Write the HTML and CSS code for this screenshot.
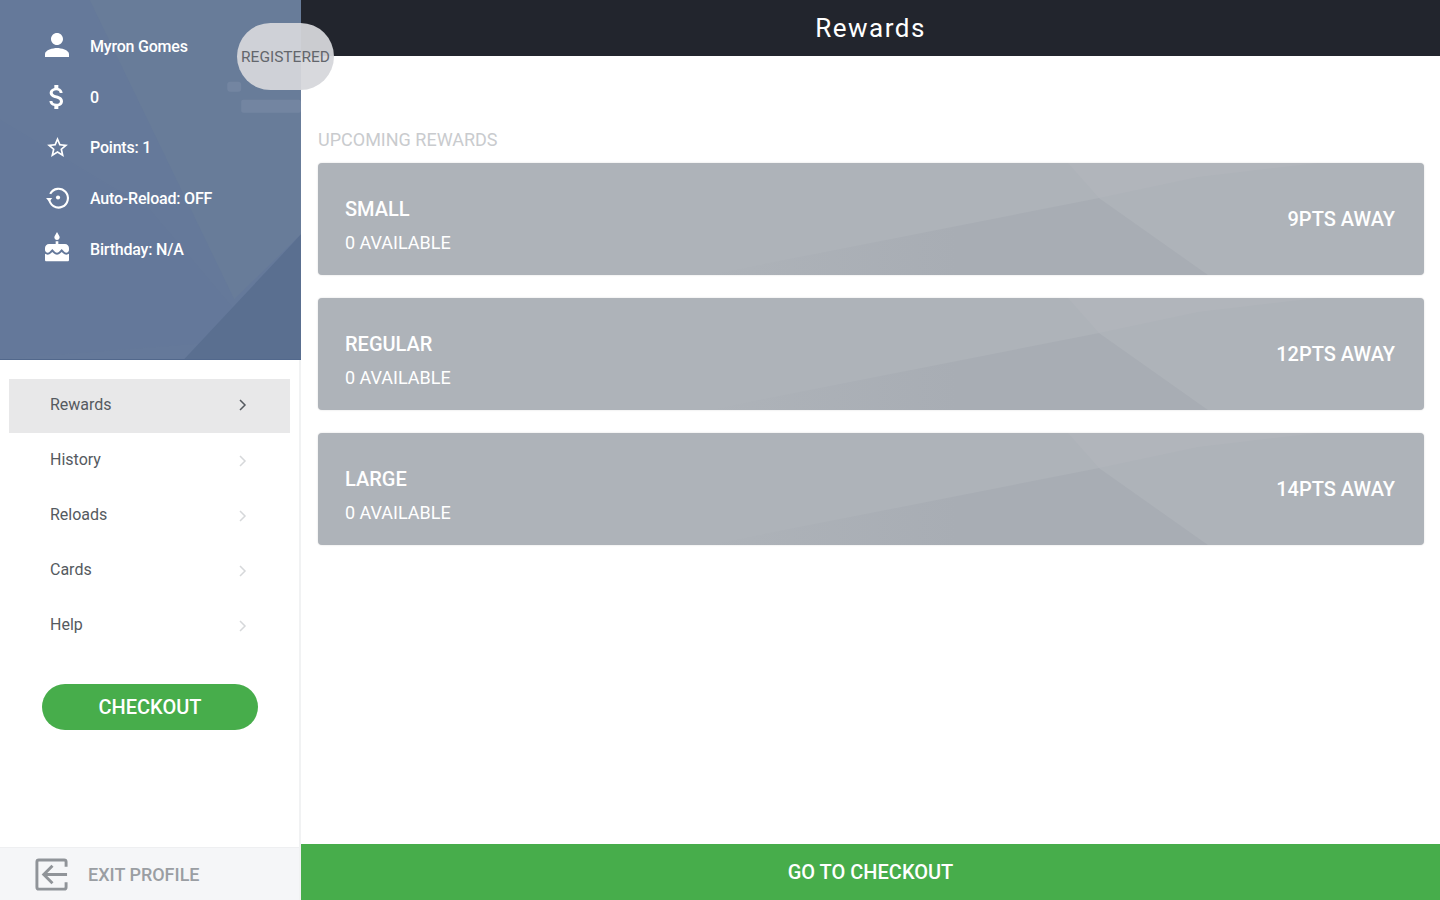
FILE: index.html
```html
<!DOCTYPE html>
<html>
<head>
    <meta charset="UTF-8">
    <title>Rewards</title>
    <link rel="stylesheet" href="styles.css">
</head>
<body>
    <div class="app">
        <aside class="sidebar">
            <div class="profile">
                <svg class="profile-bg" viewBox="0 0 302 360" preserveAspectRatio="none">
                    <polygon points="90,0 302,0 302,235 235,300" fill="#687c99"/>
                    <polygon points="0,120 150,210 260,340 0,360" fill="#64779a" opacity="0.35"/>
                    <polygon points="185,360 302,235 302,360" fill="#5a6f90"/>
                    <rect x="228" y="82" width="14" height="10" rx="3" fill="#7385a1"/>
                    <rect x="242" y="100" width="60" height="13" rx="2" fill="#7385a1"/>
                </svg>
                <div class="profile-row">
                    <svg class="profile-icon icon-user" viewBox="0 0 24 24"><path d="M12 12c2.21 0 4-1.79 4-4s-1.79-4-4-4-4 1.79-4 4 1.79 4 4 4zm0 2c-2.67 0-8 1.34-8 4v2h16v-2c0-2.66-5.33-4-8-4z"/></svg>
                    <span>Myron Gomes</span>
                </div>
                <div class="profile-row">
                    <svg class="profile-icon icon-money" viewBox="0 0 24 24"><path d="M11.8 10.9c-2.27-.59-3-1.2-3-2.15 0-1.09 1.01-1.85 2.7-1.85 1.78 0 2.44.85 2.5 2.1h2.21c-.07-1.72-1.12-3.3-3.21-3.81V3h-3v2.16c-1.94.42-3.5 1.68-3.5 3.61 0 2.31 1.91 3.46 4.7 4.13 2.5.6 3 1.48 3 2.41 0 .69-.49 1.79-2.7 1.79-2.06 0-2.87-.92-2.98-2.1h-2.2c.12 2.19 1.76 3.42 3.68 3.83V21h3v-2.15c1.95-.37 3.5-1.5 3.5-3.55 0-2.84-2.43-3.81-4.7-4.4z"/></svg>
                    <span>0</span>
                </div>
                <div class="profile-row">
                    <svg class="profile-icon icon-star" viewBox="0 0 24 24"><path d="M22 9.24l-7.19-.62L12 2 9.19 8.63 2 9.24l5.46 4.73L5.82 21 12 17.27 18.18 21l-1.63-7.03L22 9.24zM12 15.4l-3.76 2.27 1-4.28-3.32-2.88 4.38-.38L12 6.1l1.71 4.04 4.38.38-3.32 2.88 1 4.28L12 15.4z"/></svg>
                    <span>Points: 1</span>
                </div>
                <div class="profile-row">
                    <svg class="profile-icon icon-reload" viewBox="0 0 24 24"><path class="icon-line" d="M5 8.5A9 9 0 1 1 4 13"/><path d="M1 12.5h6l-3 3.5z"/><circle cx="12.5" cy="12" r="2"/></svg>
                    <span>Auto-Reload: OFF</span>
                </div>
                <div class="profile-row">
                    <svg class="profile-icon icon-cake" viewBox="0 0 24 24"><path d="M12 6c1.11 0 2-.9 2-2 0-.38-.1-.73-.29-1.03L12 0l-1.71 2.97c-.19.3-.29.65-.29 1.03 0 1.1.9 2 2 2zm4.6 9.99l-1.07-1.07-1.08 1.07c-1.3 1.3-3.58 1.31-4.89 0l-1.07-1.07-1.09 1.07C6.75 16.64 5.88 17 4.96 17c-.73 0-1.4-.23-1.96-.61V21c0 .55.45 1 1 1h16c.55 0 1-.45 1-1v-4.61c-.56.38-1.23.61-1.96.61-.92 0-1.79-.36-2.44-1.01zM18 9h-5V7h-2v2H6c-1.66 0-3 1.34-3 3v1.54c0 1.08.88 1.96 1.96 1.96.52 0 1.02-.2 1.38-.57l2.14-2.13 2.13 2.13c.74.74 2.03.74 2.77 0l2.14-2.13 2.13 2.13c.37.37.86.57 1.38.57 1.08 0 1.96-.88 1.96-1.96V12C21 10.34 19.66 9 18 9z"/></svg>
                    <span>Birthday: N/A</span>
                </div>
            </div>

            <nav class="menu">
                <a class="menu-item active">Rewards<svg class="chevron" viewBox="0 0 10 14"><path d="M2 2l5 5-5 5"/></svg></a>
                <a class="menu-item">History<svg class="chevron" viewBox="0 0 10 14"><path d="M2 2l5 5-5 5"/></svg></a>
                <a class="menu-item">Reloads<svg class="chevron" viewBox="0 0 10 14"><path d="M2 2l5 5-5 5"/></svg></a>
                <a class="menu-item">Cards<svg class="chevron" viewBox="0 0 10 14"><path d="M2 2l5 5-5 5"/></svg></a>
                <a class="menu-item">Help<svg class="chevron" viewBox="0 0 10 14"><path d="M2 2l5 5-5 5"/></svg></a>
            </nav>

            <button class="checkout-btn" type="button">CHECKOUT</button>

            <div class="exit-bar">
                <svg class="exit-icon" viewBox="0 0 36 36"><path d="M33 10V5a2 2 0 0 0-2-2H5a2 2 0 0 0-2 2v26a2 2 0 0 0 2 2h26a2 2 0 0 0 2-2v-5"/><path d="M34 18H11M19 9l-9 9 9 9"/></svg>
                <span>EXIT PROFILE</span>
            </div>
        </aside>

        <main class="main">
            <header class="topbar">Rewards</header>
            <section class="content">
                <h2 class="section-title">UPCOMING REWARDS</h2>
                <div class="reward">
                    <svg class="reward-bg" viewBox="0 0 1106 112" preserveAspectRatio="none">
                        <defs>
                            <linearGradient id="shade" x1="0" y1="0" x2="1" y2="0">
                                <stop offset="0" stop-color="#a8adb4" stop-opacity="0"/>
                                <stop offset="0.5" stop-color="#a8adb4"/>
                            </linearGradient>
                        </defs>
                        <polygon class="shade" points="390,112 781,35 890,112"/>
                        <polygon class="glare" points="750,0 781,35 880,14 1000,0"/>
                    </svg>
                    <div class="reward-info">
                        <div class="reward-name">SMALL</div>
                        <div class="reward-count">0 AVAILABLE</div>
                    </div>
                    <div class="reward-away">9PTS AWAY</div>
                </div>
                <div class="reward">
                    <svg class="reward-bg" viewBox="0 0 1106 112" preserveAspectRatio="none">
                        <polygon class="shade" points="390,112 781,35 890,112"/>
                        <polygon class="glare" points="750,0 781,35 880,14 1000,0"/>
                    </svg>
                    <div class="reward-info">
                        <div class="reward-name">REGULAR</div>
                        <div class="reward-count">0 AVAILABLE</div>
                    </div>
                    <div class="reward-away">12PTS AWAY</div>
                </div>
                <div class="reward">
                    <svg class="reward-bg" viewBox="0 0 1106 112" preserveAspectRatio="none">
                        <polygon class="shade" points="390,112 781,35 890,112"/>
                        <polygon class="glare" points="750,0 781,35 880,14 1000,0"/>
                    </svg>
                    <div class="reward-info">
                        <div class="reward-name">LARGE</div>
                        <div class="reward-count">0 AVAILABLE</div>
                    </div>
                    <div class="reward-away">14PTS AWAY</div>
                </div>
            </section>
            <button class="footer-btn" type="button">GO TO CHECKOUT</button>
        </main>

        <div class="badge">REGISTERED</div>
    </div>
</body>
</html>
```

FILE: styles.css
```css
* {
    box-sizing: border-box;
}
body {
    margin: 0;
    font-family: Roboto, "Liberation Sans", sans-serif;
    background-color: #fff;
}
.app {
    position: relative;
    display: flex;
    height: 900px;
    overflow: hidden;
}

/* sidebar */
.sidebar {
    display: flex;
    flex-direction: column;
    width: 301px;
    flex-shrink: 0;
    border-right: 2px solid #f1f2f3;
}
.profile {
    position: relative;
    height: 360px;
    margin-right: -2px;
    padding-top: 21px;
    background-color: #65799a;
    border-bottom: 1px solid #52688c;
}
.profile-bg {
    position: absolute;
    top: 0;
    left: 0;
    width: 100%;
    height: 100%;
}
.profile-row {
    position: relative;
    display: flex;
    align-items: center;
    height: 50.75px;
    padding-left: 44px;
    color: #fff;
    font-size: 16px;
    font-weight: 500;
    letter-spacing: -0.2px;
}
.profile-icon {
    width: 26px;
    height: 26px;
    margin-right: 20px;
    fill: #fff;
}
.icon-user {
    width: 36px;
    height: 36px;
    margin: -3px 15px 0 -5px;
}
.icon-money {
    width: 32px;
    height: 32px;
    margin: -1px 17px 0 -3px;
}
.icon-star {
    width: 25px;
    height: 25px;
    margin: -1px 20px 0 1px;
}
.icon-reload {
    width: 25px;
    height: 25px;
    margin: -2px 20px 0 1px;
}
.icon-cake {
    width: 32px;
    height: 32px;
    margin: -2px 17px 0 -3px;
}
.icon-line {
    fill: none;
    stroke: #fff;
    stroke-width: 2;
}

.menu {
    display: flex;
    flex-direction: column;
    padding: 19px 9px 0;
}
.menu-item {
    display: flex;
    align-items: center;
    justify-content: space-between;
    height: 55px;
    padding: 0 42px 4px 41px;
    color: #555a60;
    font-size: 16px;
}
.menu-item.active {
    height: 54px;
    margin-bottom: 1px;
    background-color: #e8e8e9;
}
.chevron {
    width: 10px;
    height: 14px;
    margin-top: 2px;
    fill: none;
    stroke: #d6d8da;
    stroke-width: 1.5;
}
.active .chevron {
    stroke: #555a60;
}
.checkout-btn {
    align-self: flex-start;
    width: 216px;
    height: 46px;
    margin: 30px 0 0 42px;
    background-color: #47ad4b;
    color: #fff;
    border: none;
    border-radius: 23px;
    font-family: inherit;
    font-size: 20px;
    font-weight: 500;
}
.exit-bar {
    display: flex;
    align-items: center;
    height: 53px;
    margin-top: auto;
    padding-left: 34px;
    background-color: #f5f6f8;
    border-top: 1px solid #eeeff1;
    color: #9a9ea3;
    font-size: 18px;
    font-weight: 500;
}
.exit-icon {
    width: 35px;
    height: 35px;
    margin-right: 19px;
    fill: none;
    stroke: #909499;
    stroke-width: 3;
}

/* main */
.main {
    display: flex;
    flex-direction: column;
    flex: 1;
    min-width: 0;
}
.topbar {
    height: 56px;
    line-height: 56px;
    background-color: #22252d;
    color: #fff;
    font-size: 26px;
    text-align: center;
    letter-spacing: 1.5px;
}
.content {
    flex: 1;
    padding: 73px 16px 0 17px;
}
.section-title {
    margin: 0 0 12px;
    color: #c9cbce;
    font-size: 18px;
    font-weight: 400;
    line-height: 22px;
}
.reward {
    position: relative;
    display: flex;
    align-items: center;
    justify-content: space-between;
    height: 112px;
    margin-bottom: 23px;
    padding: 0 29px 0 27px;
    background-color: #aeb3b9;
    border-radius: 4px;
    box-shadow: 0 0 2px rgba(0, 0, 0, 0.15);
    overflow: hidden;
    color: #fff;
}
.reward-bg {
    position: absolute;
    top: 0;
    left: 0;
    width: 100%;
    height: 100%;
}
.shade {
    fill: url(#shade);
}
.glare {
    fill: #b1b5bb;
}
.reward-info,
.reward-away {
    position: relative;
}
.reward-info {
    padding-top: 13px;
}
.reward-name {
    font-size: 20px;
    font-weight: 500;
    line-height: 24px;
    margin-bottom: 11px;
}
.reward-count {
    font-size: 18px;
    line-height: 22px;
}
.reward-away {
    font-size: 20px;
    font-weight: 500;
}
.footer-btn {
    height: 56px;
    background-color: #47ad4b;
    color: #fff;
    border: none;
    font-family: inherit;
    font-size: 20px;
    font-weight: 500;
}

.badge {
    position: absolute;
    top: 23px;
    left: 237px;
    width: 97px;
    height: 67px;
    padding-top: 1px;
    line-height: 67px;
    border-radius: 34px;
    background-color: rgba(214, 215, 219, 0.94);
    color: #63666c;
    font-size: 15.5px;
    text-align: center;
}
```
